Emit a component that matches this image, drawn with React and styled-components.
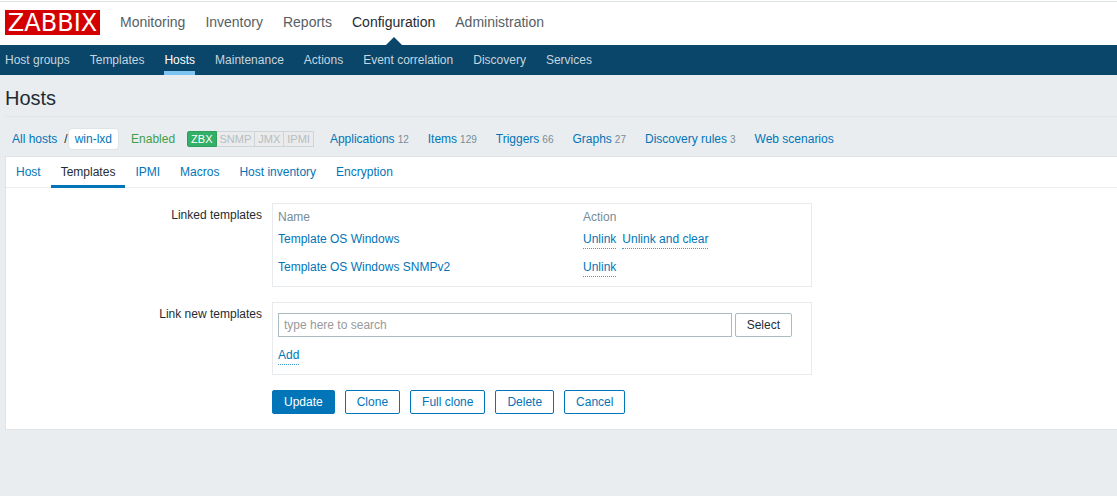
import React, { useState } from "react";
import styled, { createGlobalStyle } from "styled-components";


const GlobalStyle = createGlobalStyle`

	*{
		box-sizing:border-box;
	}

	body{
		margin:0;
		background-color:#e9edf0;
		color:#1f2c33;
		font-family:"Liberation Sans", Arial, sans-serif;
		font-size:12px;
		line-height:14px;
	}

	a{
		color:#0275b8;
		text-decoration:none;
	}

	button, input{
		font-family:inherit;
		font-size:12px;
		line-height:14px;
	}

`;


const TopBar = styled.header`

	display:flex;
	align-items:center;
	height:45px;
	padding:0 5px;
	background:linear-gradient(#ffffff 1px, #dfe4e7 1px, #dfe4e7 2px, #ffffff 2px);

`;

const Logo = styled.a`

	width:95px;
	height:25px;
	margin-right:10px;
	background-color:#d40000;
	color:white;
	font-family:"DejaVu Sans", sans-serif;
	font-size:24px;
	line-height:26px;
	text-align:center;

`;

const TopLink = styled.a`

	position:relative;
	padding:14px 10px 15px;
	font-size:14px;
	line-height:16px;
	color:${props => props.$active ? "#1f2c33" : "#566065"};

	&::after{
		content:"";
		display:${props => props.$active ? "block" : "none"};
		position:absolute;
		left:50%;
		bottom:0;
		margin-left:-8px;
		border:8px solid transparent;
		border-top-width:0;
		border-bottom-color:#0a466a;
	}

`;

const SubBar = styled.nav`

	display:flex;
	gap:20px;
	height:30px;
	padding:0 5px;
	background-color:#0a466a;

`;

const SubLink = styled.a`

	padding-top:8px;
	color:${props => props.$active ? "#ffffff" : "#c6d5df"};
	border-bottom:4px solid ${props => props.$active ? "#7ec4f2" : "transparent"};

`;

const PageTitle = styled.h1`

	margin:0 0 0 5px;
	padding:11px 0 6px;
	border-bottom:1px solid #dfe4e7;
	font-size:20px;
	font-weight:normal;
	line-height:24px;

`;

const HostBar = styled.div`

	display:flex;
	align-items:center;
	height:39px;
	padding:5px 12px 0;

`;

const CurrentHost = styled.a`

	margin-right:12px;
	padding:3px 6px;
	background-color:white;
	border:1px solid #dfe4e7;
	border-radius:4px;

`;

const Slash = styled.span`

	margin-left:7px;

`;

const HostStatus = styled.span`

	margin-right:12px;
	color:#429e47;

`;

const Availability = styled.span`

	display:flex;
	height:16px;
	margin-right:16px;
	font-size:11px;

`;

const AvailabilityItem = styled.span`

	padding:0 3px;
	border:1px solid ${props => props.$on ? "#2f9f5e" : "#ccd5d9"};
	border-left-width:${props => props.$first ? "1px" : "0"};
	border-radius:${props => props.$first ? "2px 0 0 2px" : "0"};
	background-color:${props => props.$on ? "#34af67" : "#ebebeb"};
	color:${props => props.$on ? "#ffffff" : "#b3bec4"};

`;

const HostLinks = styled.nav`

	display:flex;
	gap:19px;

`;

const Counter = styled.span`

	margin-left:3px;
	color:#768d99;
	font-size:10px;

`;

const Panel = styled.main`

	margin-left:5px;
	background-color:white;
	border:1px solid #dfe4e7;
	border-right:0;

`;

const Tabs = styled.nav`

	display:flex;
	height:31px;
	border-bottom:1px solid #ebeef0;

`;

const Tab = styled.a`

	height:31px;
	padding:8px 10px 0;
	color:${props => props.$active ? "#1f2c33" : "#0275b8"};
	border-bottom:3px solid ${props => props.$active ? "#0275b8" : "transparent"};

`;

const Form = styled.form`

	display:flex;
	flex-direction:column;
	gap:15px;
	padding:15px 10px;

`;

const FormRow = styled.div`

	display:grid;
	grid-template-columns:246px minmax(0, 540px);
	column-gap:10px;

`;

const FormLabel = styled.label`

	padding-top:5px;
	text-align:right;

`;

const FieldBox = styled.div`

	padding:5px;
	border:1px solid #e8ebed;

`;

const TemplateTable = styled.table`

	width:100%;
	border-collapse:collapse;
	table-layout:fixed;

	th, td{
		padding:0;
		text-align:left;
		vertical-align:top;
		font-weight:normal;
	}

	th{
		height:20px;
		padding-top:1px;
		color:#768d99;
	}

	th:first-child{
		width:305px;
	}

	td{
		height:28px;
		padding-top:3px;
	}

	tr:last-child td{
		height:24px;
	}

`;

const ActionButton = styled.button`

	margin-right:6px;
	padding:0 0 2px;
	background:none;
	border:0;
	border-bottom:1px dotted #3d9bd1;
	color:#0275b8;
	cursor:pointer;

`;

const SearchRow = styled.div`

	display:flex;
	gap:3px;
	padding:5px 14px 11px 0;

`;

const AddRow = styled.div`

	padding-bottom:4px;

`;

const SearchInput = styled.input`

	flex:1;
	min-width:0;
	height:24px;
	padding:0 5px;
	border:1px solid #acbbc2;
	color:#1f2c33;

	&::placeholder{
		color:#9a9a9a;
	}

`;

const Button = styled.button`

	height:24px;
	padding:0 11px;
	border:1px solid ${props => props.$plain ? "#acbbc2" : "#0275b8"};
	border-radius:2px;
	background-color:${props => props.$main ? "#0275b8" : "#ffffff"};
	color:${props => props.$main ? "#ffffff" : props.$plain ? "#1f2c33" : "#0275b8"};
	cursor:pointer;

`;

const ButtonRow = styled.div`

	grid-column:2;
	display:flex;
	flex-wrap:wrap;
	gap:10px;

`;


const topMenu = ["Monitoring", "Inventory", "Reports", "Configuration", "Administration"];

const subMenu = ["Host groups", "Templates", "Hosts", "Maintenance", "Actions", "Event correlation", "Discovery", "Services"];

const interfaces = ["ZBX", "SNMP", "JMX", "IPMI"];

const hostLinks = [
	{ name: "Applications", count: 12 },
	{ name: "Items", count: 129 },
	{ name: "Triggers", count: 66 },
	{ name: "Graphs", count: 27 },
	{ name: "Discovery rules", count: 3 },
	{ name: "Web scenarios" },
];

const tabs = ["Host", "Templates", "IPMI", "Macros", "Host inventory", "Encryption"];

const linkedTemplates = [
	{ name: "Template OS Windows", actions: ["Unlink", "Unlink and clear"] },
	{ name: "Template OS Windows SNMPv2", actions: ["Unlink"] },
];


function Header(){
	return (
		<>
			<TopBar>
				<Logo href="#">ZABBIX</Logo>
				{topMenu.map(item => (
					<TopLink key={item} href="#" $active={item === "Configuration"}>{item}</TopLink>
				))}
			</TopBar>
			<SubBar>
				{subMenu.map(item => (
					<SubLink key={item} href="#" $active={item === "Hosts"}>{item}</SubLink>
				))}
			</SubBar>
		</>
	);
}

function HostNavigation(){
	return (
		<HostBar>
			<a href="#">All hosts</a>
			<Slash>/</Slash>
			<CurrentHost href="#">win-lxd</CurrentHost>
			<HostStatus>Enabled</HostStatus>
			<Availability>
				{interfaces.map((item, i) => (
					<AvailabilityItem key={item} $on={item === "ZBX"} $first={i === 0}>{item}</AvailabilityItem>
				))}
			</Availability>
			<HostLinks>
				{hostLinks.map(link => (
					<span key={link.name}>
						<a href="#">{link.name}</a>
						{link.count && <Counter>{link.count}</Counter>}
					</span>
				))}
			</HostLinks>
		</HostBar>
	);
}

function TemplatesForm(){
	const [search, setSearch] = useState("");

	return (
		<Form onSubmit={e => e.preventDefault()}>
			<FormRow>
				<FormLabel as="span" id="linked-label">Linked templates</FormLabel>
				<FieldBox>
					<TemplateTable aria-labelledby="linked-label">
						<thead>
							<tr>
								<th>Name</th>
								<th>Action</th>
							</tr>
						</thead>
						<tbody>
							{linkedTemplates.map(template => (
								<tr key={template.name}>
									<td><a href="#">{template.name}</a></td>
									<td>
										{template.actions.map(action => (
											<ActionButton key={action} type="button">{action}</ActionButton>
										))}
									</td>
								</tr>
							))}
						</tbody>
					</TemplateTable>
				</FieldBox>
			</FormRow>
			<FormRow>
				<FormLabel htmlFor="template-search">Link new templates</FormLabel>
				<FieldBox>
					<SearchRow>
						<SearchInput
							id="template-search"
							type="text"
							placeholder="type here to search"
							value={search}
							onChange={e => setSearch(e.target.value)}
						/>
						<Button type="button" $plain>Select</Button>
					</SearchRow>
					<AddRow>
						<ActionButton type="button">Add</ActionButton>
					</AddRow>
				</FieldBox>
			</FormRow>
			<FormRow>
				<ButtonRow>
					<Button type="submit" $main>Update</Button>
					<Button type="button">Clone</Button>
					<Button type="button">Full clone</Button>
					<Button type="button">Delete</Button>
					<Button type="button">Cancel</Button>
				</ButtonRow>
			</FormRow>
		</Form>
	);
}

export default function App(){
	return (
		<>
			<GlobalStyle/>
			<Header/>
			<PageTitle>Hosts</PageTitle>
			<HostNavigation/>
			<Panel>
				<Tabs>
					{tabs.map(item => (
						<Tab key={item} href="#" $active={item === "Templates"}>{item}</Tab>
					))}
				</Tabs>
				<TemplatesForm/>
			</Panel>
		</>
	);
}
